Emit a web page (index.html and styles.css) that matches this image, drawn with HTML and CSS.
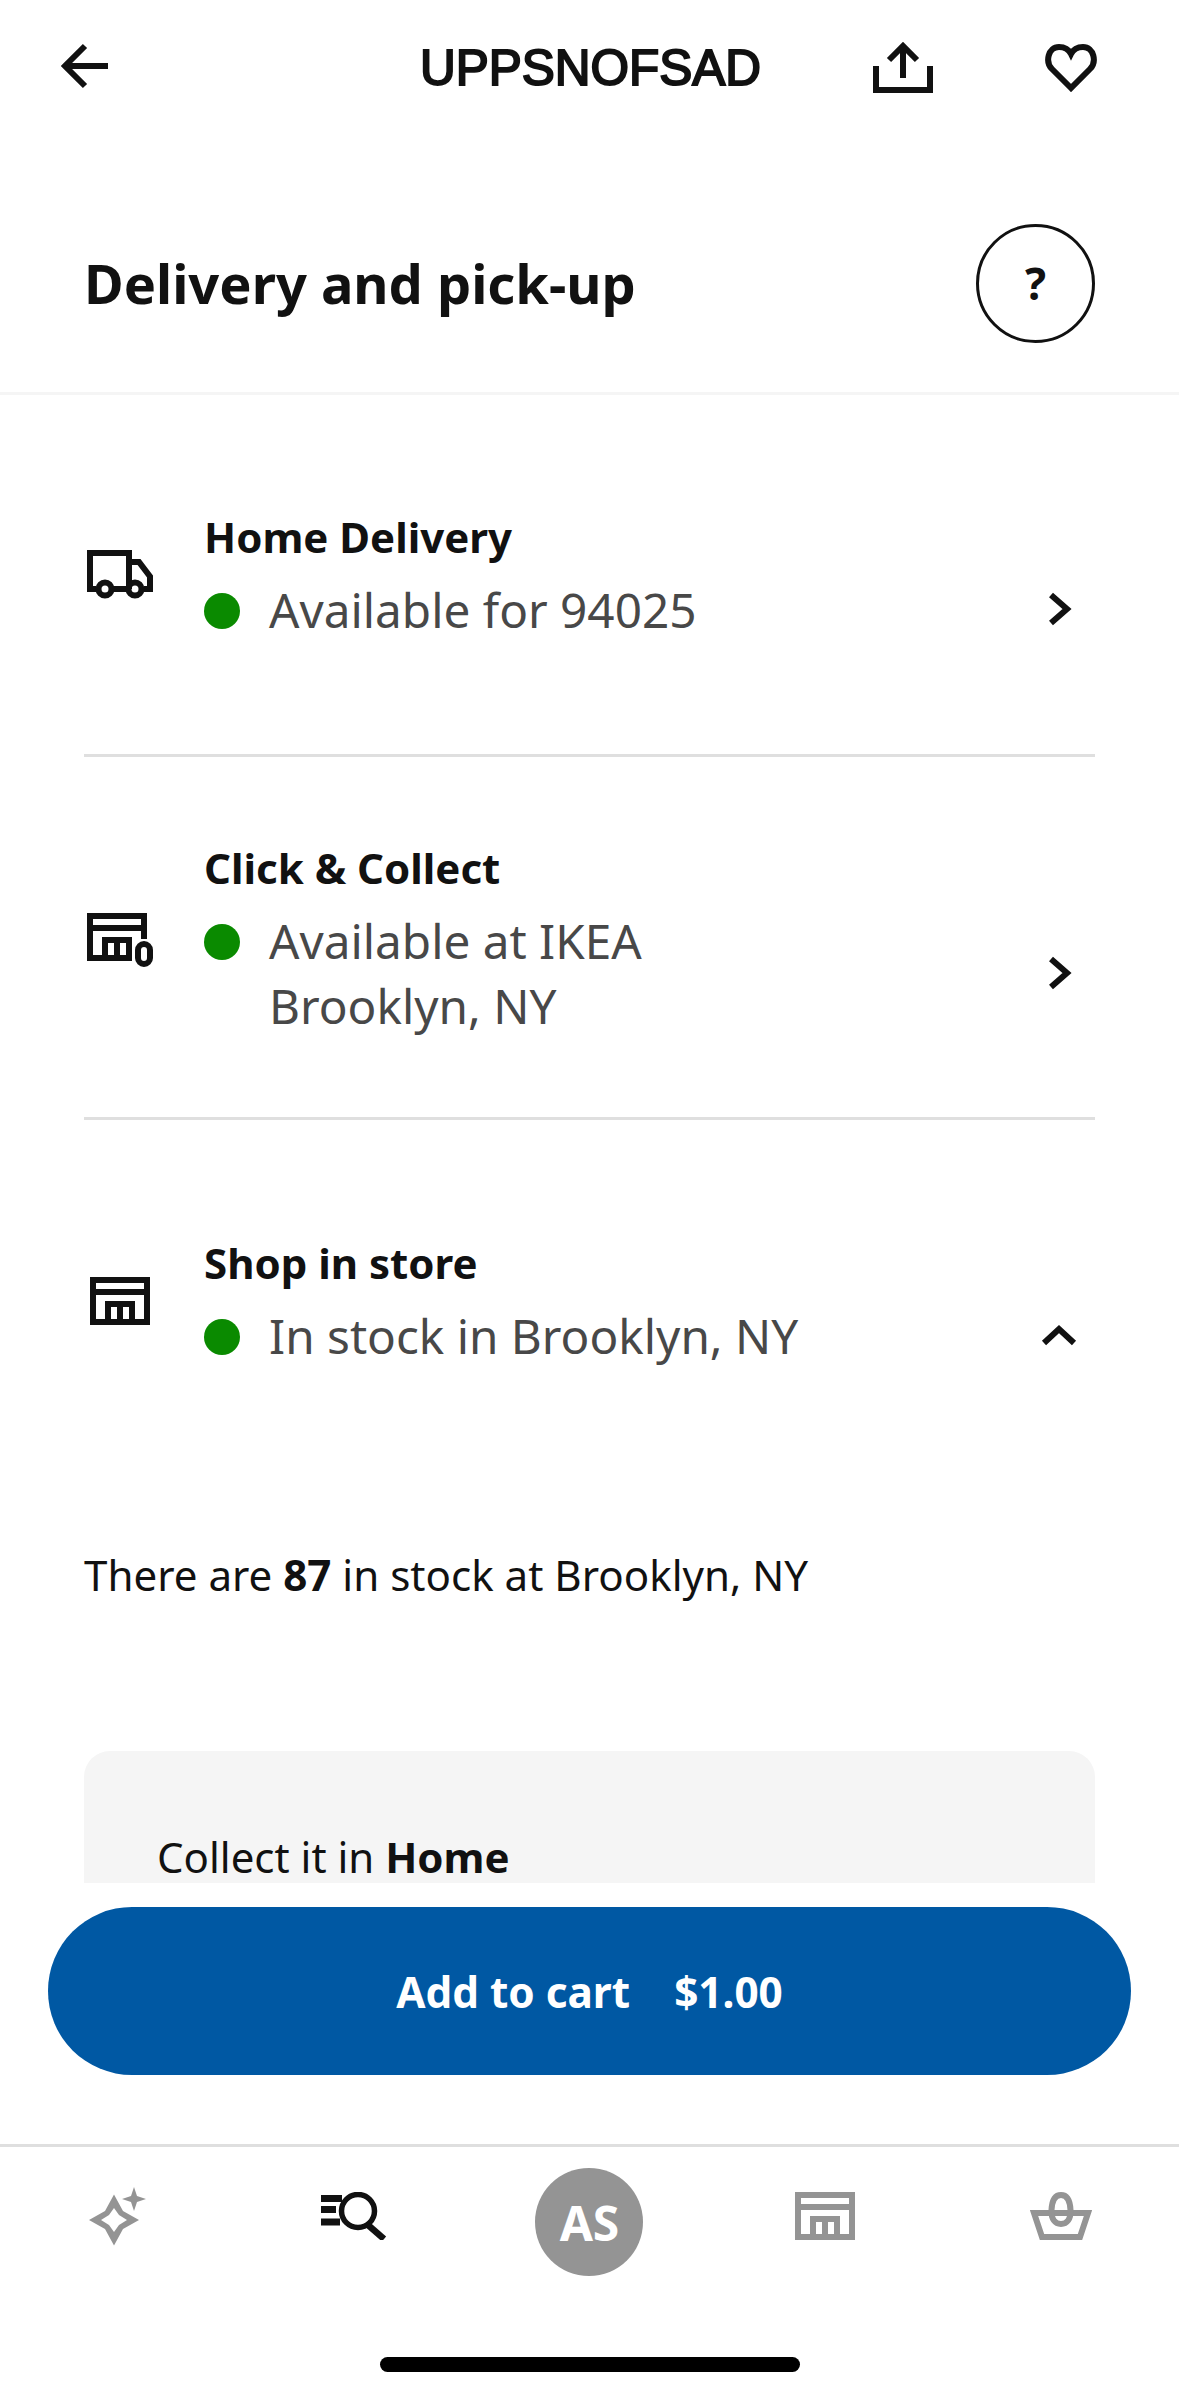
FILE: index.html
```html
<!DOCTYPE html>
<html lang="en">
<head>
    <meta charset="UTF-8">
    <meta name="viewport" content="width=device-width, initial-scale=1.0">
    <title>UPPSNOFSAD</title>
    <link rel="stylesheet" href="styles.css">
</head>
<body>
    <div class="app">
        <header class="topbar">
            <svg class="ico-back" width="47" height="46" viewBox="0 0 47 46"><path d="M47 23H6M24 3L4 23l20 20" fill="none" stroke="#111" stroke-width="6"/></svg>
            <h1>UPPSNOFSAD</h1>
            <div class="topbar-actions">
                <svg width="60" height="51" viewBox="0 0 60 51"><path d="M30 36V5M16 18L30 4l14 14M3 24v24h54V24" fill="none" stroke="#111" stroke-width="6"/></svg>
                <svg width="52" height="48" viewBox="0 0 52 48"><path d="M26 44L7 25C0 18 3 3 14 3c6 0 10 3 12 7c2-4 6-7 12-7c11 0 14 15 7 22z" fill="none" stroke="#111" stroke-width="6"/></svg>
            </div>
        </header>

        <main class="content">
            <div class="title-row">
                <h2>Delivery and pick-up</h2>
                <button class="help">?</button>
            </div>

            <section class="option">
                <div class="icon-slot">
                    <svg width="66" height="49" viewBox="0 0 66 49"><path d="M9 39H3V3h39v36M42 12h10l11 14.500V39h-6M25 39h17" fill="none" stroke="#111" stroke-width="6"/><circle cx="18" cy="39" r="6.500" fill="none" stroke="#111" stroke-width="6"/><circle cx="48" cy="39" r="6.500" fill="none" stroke="#111" stroke-width="6"/></svg>
                </div>
                <div class="option-text">
                    <h3>Home Delivery</h3>
                    <div class="status">
                        <span class="dot"></span>
                        <span>Available for 94025</span>
                        <svg class="chev" width="24" height="34" viewBox="0 0 24 34"><path d="M3 3l16 14L3 31" fill="none" stroke="#111" stroke-width="6"/></svg>
                    </div>
                </div>
            </section>

            <section class="option option-collect">
                <div class="icon-slot">
                    <svg width="66" height="54" viewBox="0 0 66 54"><path d="M57 26V3H3v42h42M3 15h54M18 45V27h24v18M30 27v18" fill="none" stroke="#111" stroke-width="6"/><rect x="51" y="31" width="12" height="20" rx="6" fill="#fff" stroke="#111" stroke-width="6"/></svg>
                </div>
                <div class="option-text">
                    <h3>Click &amp; Collect</h3>
                    <div class="status">
                        <span class="dot"></span>
                        <span>Available at IKEA<br>Brooklyn, NY</span>
                        <svg class="chev" width="24" height="34" viewBox="0 0 24 34"><path d="M3 3l16 14L3 31" fill="none" stroke="#111" stroke-width="6"/></svg>
                    </div>
                </div>
            </section>

            <section class="option option-store">
                <div class="icon-slot">
                    <svg width="60" height="48" viewBox="0 0 60 48"><path d="M3 3h54v42H3zM3 15h54M18 45V27h24v18M30 27v18" fill="none" stroke="#111" stroke-width="6"/></svg>
                </div>
                <div class="option-text">
                    <h3>Shop in store</h3>
                    <div class="status">
                        <span class="dot"></span>
                        <span>In stock in Brooklyn, NY</span>
                        <svg class="chev chev-up" width="36" height="22" viewBox="0 0 36 22"><path d="M3 19L18 5l15 14" fill="none" stroke="#111" stroke-width="6"/></svg>
                    </div>
                </div>
            </section>

            <p class="stock">There are <b>87</b> in stock at Brooklyn, NY</p>

            <div class="collect-card">
                <p>Collect it in <b>Home</b></p>
            </div>
        </main>

        <div class="cart-bar">
            <button class="add-btn"><span>Add to cart</span><span>$1.00</span></button>
        </div>

        <nav class="tabbar">
            <svg class="tab-icon" width="57" height="59" viewBox="0 0 57 59"><path fill-rule="evenodd" d="M25 7.500L34 24l16 9-16 9-9 16.500L16 42 0 33l16-9zM25 21l-5 7-8 5 8 5 5 7 5-7 8-5-8-5z" fill="#949494"/><path d="M45 0l3 9 9 3-9 3-3 9-3-9-9-3 9-3z" fill="#949494"/></svg>
            <svg class="tab-icon" width="66" height="48" viewBox="0 0 66 48"><path d="M0 6.500h21M0 17.500h15M0 30h19" fill="none" stroke="#111" stroke-width="7"/><circle cx="37" cy="19" r="16.500" fill="none" stroke="#111" stroke-width="5.500"/><path d="M47 33l16 14" fill="none" stroke="#111" stroke-width="6.500"/></svg>
            <div class="avatar">AS</div>
            <svg class="tab-icon" width="60" height="48" viewBox="0 0 60 48"><path d="M3 3h54v42H3zM3 15h54M18 45V27h24v18M30 27v18" fill="none" stroke="#949494" stroke-width="6"/></svg>
            <svg class="tab-icon" width="62" height="48" viewBox="0 0 62 48"><path d="M4 21h54l-8 24H12z" fill="none" stroke="#949494" stroke-width="6"/><path d="M21.500 18C22 8 25 3 31 3s9 5 9.500 15C41 27 37 32 31 32s-10-5-9.500-14z" fill="none" stroke="#949494" stroke-width="6"/></svg>
        </nav>
        <div class="home-indicator"></div>
    </div>
</body>
</html>
```
FILE: styles.css
```css
body {
    margin: 0;
    background-color: #fff;
    font-family: 'Noto Sans', sans-serif;
    color: #111;
}

h1, h2, h3, p {
    margin: 0;
}

.app {
    width: 1179px;
    height: 2396px;
    display: flex;
    flex-direction: column;
    overflow: hidden;
}

/* top bar */
.topbar {
    height: 132px;
    flex: none;
    box-sizing: border-box;
    display: flex;
    align-items: center;
    position: relative;
    padding: 3px 82px 0 61px;
}

.ico-back {
    margin-bottom: 3px;
}

.topbar h1 {
    position: absolute;
    left: 2px;
    right: 0;
    text-align: center;
    font-family: 'Liberation Sans', sans-serif;
    font-size: 49.5px;
    font-weight: 400;
    -webkit-text-stroke: 2px #111;
}

.topbar-actions {
    margin-left: auto;
    display: flex;
    align-items: center;
    gap: 112px;
}

/* scrolling part */
.content {
    flex: 1;
    min-height: 0;
    overflow: hidden;
}

.title-row {
    height: 263px;
    box-sizing: border-box;
    display: flex;
    align-items: center;
    justify-content: space-between;
    padding: 42px 84px 0;
    border-bottom: 3px solid #f5f5f5;
}

.title-row h2 {
    font-size: 54.2px;
    font-weight: 700;
}

.help {
    width: 119px;
    height: 119px;
    border: 3px solid #111;
    border-radius: 50%;
    background: #fff;
    font-family: 'Noto Sans', sans-serif;
    font-size: 44px;
    font-weight: 700;
    color: #111;
    padding: 0;
}

.option {
    margin: 0 84px;
    height: 362px;
    box-sizing: border-box;
    display: flex;
    align-items: center;
    border-bottom: 3px solid #dfdfdf;
}

.option-collect {
    height: 363px;
}

.option-store {
    border-bottom: none;
    height: 361px;
}

.icon-slot {
    flex: none;
    width: 120px;
    box-sizing: border-box;
    padding-left: 3px;
    display: flex;
}

.option-collect .icon-slot {
    margin-top: 5px;
}

.option-store .icon-slot {
    padding-left: 6px;
}

.option-text {
    flex: 1;
}

.option-collect .option-text {
    padding-top: 3px;
}

.option-text h3 {
    font-size: 42px;
    line-height: 58px;
    font-weight: 700;
}

.status {
    display: flex;
    gap: 29px;
    font-size: 47.700px;
    line-height: 65px;
    color: #484848;
    margin-top: 11px;
}

.dot {
    flex: none;
    width: 36px;
    height: 36px;
    margin-top: 16px;
    border-radius: 50%;
    background-color: #0a8a00;
}

.chev {
    flex: none;
    align-self: center;
    margin-left: auto;
    margin-right: 23px;
}

.chev-up {
    margin-right: 18px;
}

.stock {
    margin: 64px 84px 0;
    font-size: 42.100px;
    line-height: 60px;
}

.collect-card {
    margin: 146px 84px 0;
    height: 300px;
    box-sizing: border-box;
    padding: 80px 73px;
    background-color: #f5f5f5;
    border-radius: 26px;
    font-size: 42px;
    line-height: 52px;
}

/* bottom */
.cart-bar {
    flex: none;
    height: 264px;
    box-sizing: border-box;
    padding: 24px 48px 0;
    background: #fff;
    border-bottom: 3px solid #dfdfdf;
}

.add-btn {
    width: 100%;
    height: 168px;
    border: none;
    border-radius: 84px;
    background-color: #0058a3;
    color: #fff;
    font-family: 'Noto Sans', sans-serif;
    font-size: 42.300px;
    font-weight: 700;
    display: flex;
    align-items: center;
    justify-content: center;
    gap: 44px;
}

.tabbar {
    flex: none;
    height: 150px;
    display: grid;
    grid-template-columns: repeat(5, 1fr);
    align-items: center;
    justify-items: center;
}

.tab-icon {
    margin-bottom: 12px;
}

.avatar {
    width: 108px;
    height: 108px;
    border-radius: 50%;
    background-color: #949494;
    color: #fff;
    font-size: 48px;
    font-weight: 700;
    display: flex;
    align-items: center;
    justify-content: center;
}

.home-indicator {
    width: 420px;
    height: 15px;
    flex: none;
    margin: 60px auto 24px;
    border-radius: 8px;
    background-color: #000;
}
```
